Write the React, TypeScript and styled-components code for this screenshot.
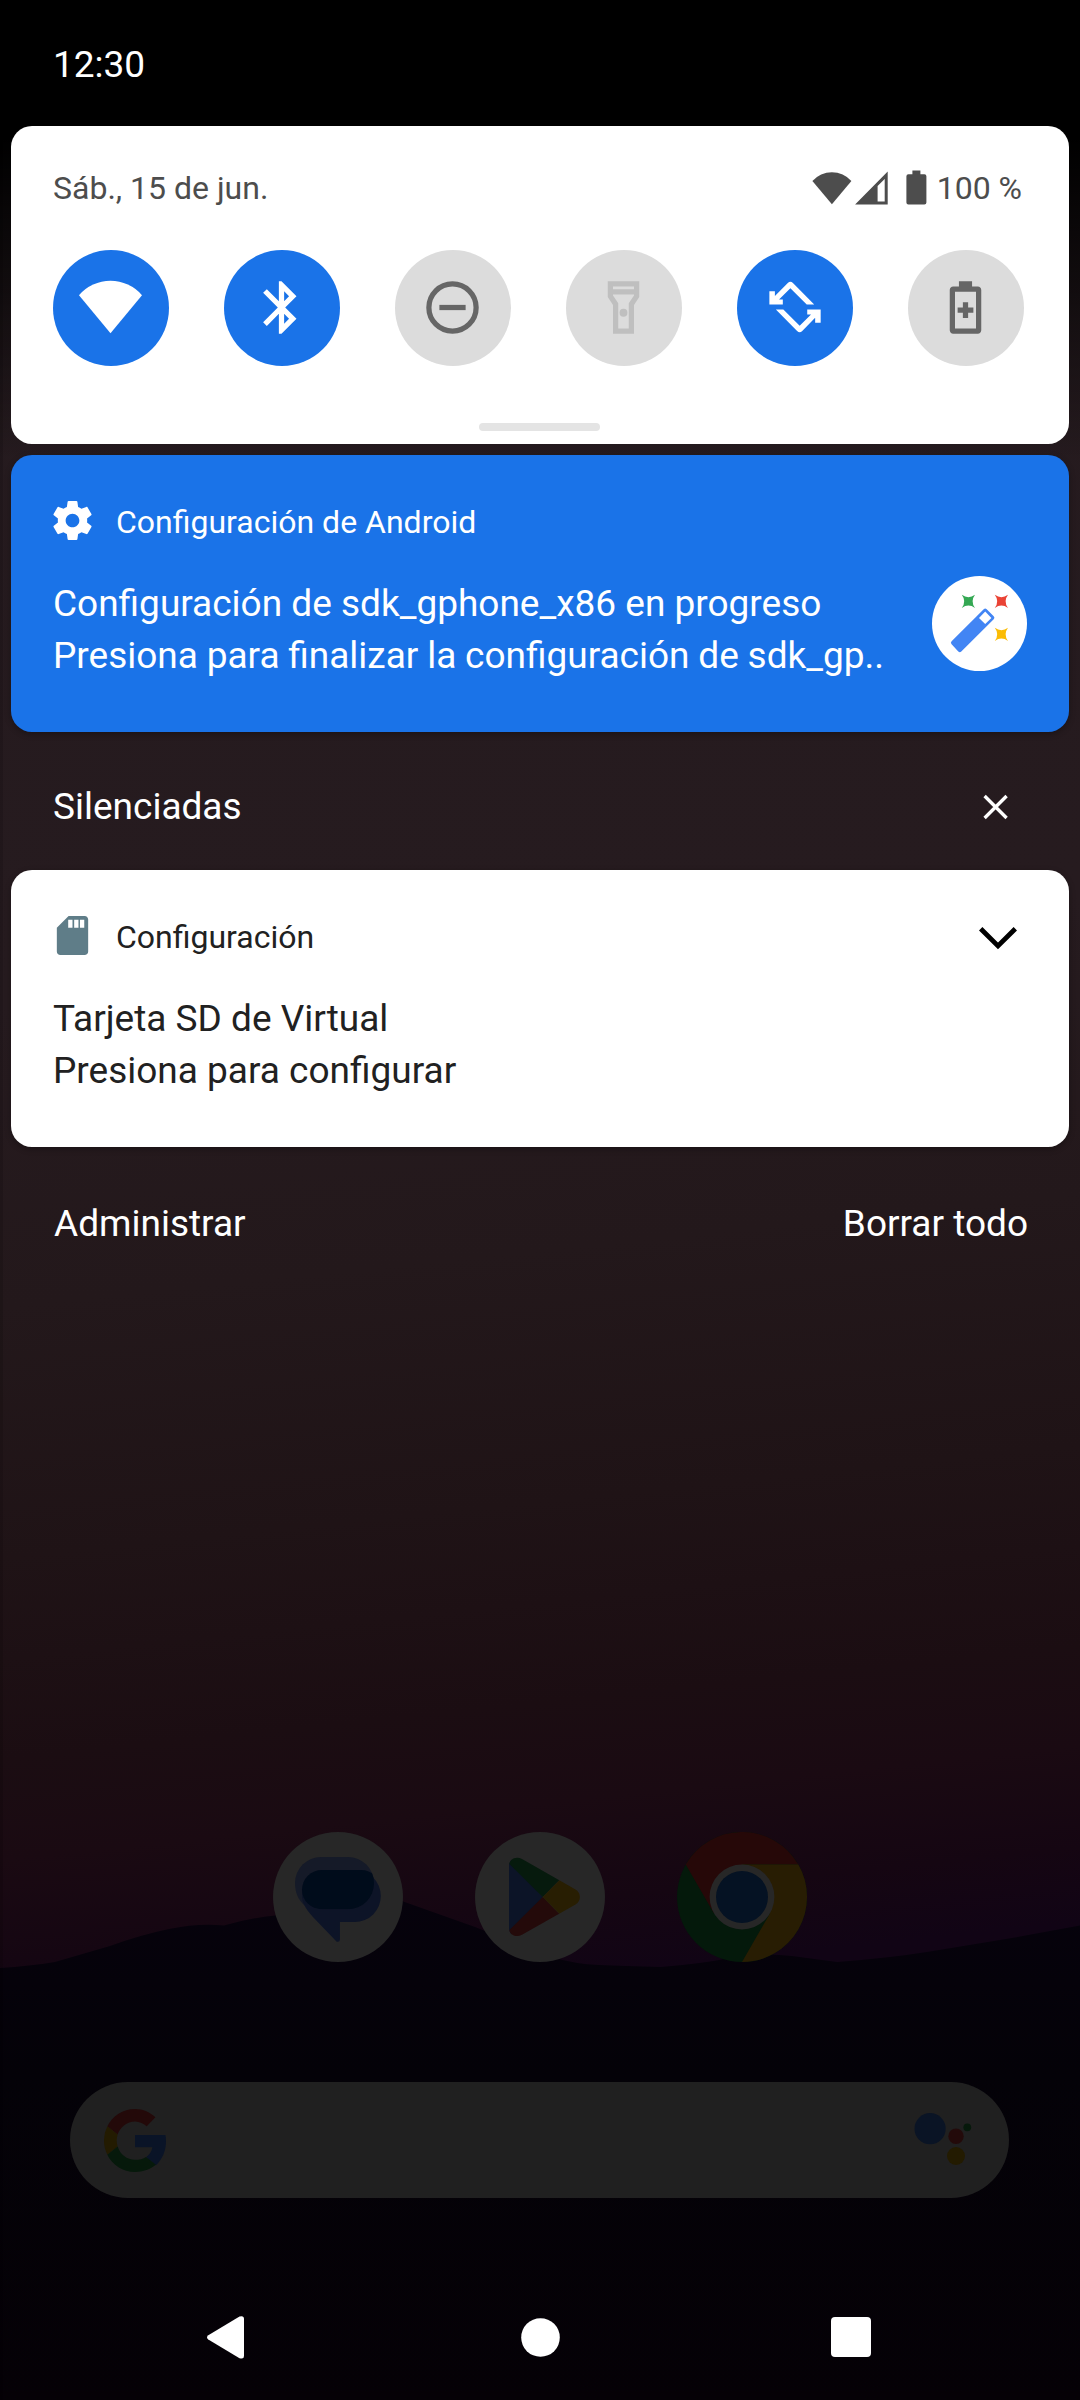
import React from "react";
import styled, { createGlobalStyle } from "styled-components";

const Global = createGlobalStyle`
  * { box-sizing: border-box; }
  body { margin: 0; background: #000; }
`;

const Screen = styled.div`
  position: relative;
  isolation: isolate;
  display: flex;
  flex-direction: column;
  width: 1080px;
  height: 2400px;
  overflow: hidden;
  font-family: Roboto, "Noto Sans", sans-serif;
  font-size: 37px;
  line-height: 52px;
  color: #fff;
  background: linear-gradient(
    174deg,
    #241a1e 0%,
    #261b1f 40%,
    #23181b 52%,
    #1f1316 62%,
    #1b0d12 70%,
    #1a0a12 74%,
    #150612 78%,
    #110415 81%
  );
`;

const Wallpaper = styled.svg`
  position: absolute;
  inset: 0;
  z-index: -1;
`;

const StatusBar = styled.header`
  display: flex;
  align-items: center;
  height: 126px;
  padding: 4px 53px 0;
`;

const Shade = styled.main`
  display: flex;
  flex-direction: column;
  padding: 0 11px;
`;

const QuickSettings = styled.section`
  display: flex;
  flex-direction: column;
  height: 318px;
  padding: 36px 42px 13px;
  border-radius: 21px;
  background: #fff;
  color: #4d4d4d;
`;

const QuickHeader = styled.div`
  display: flex;
  align-items: center;
  justify-content: space-between;
  height: 53px;
  font-size: 32px;
  line-height: 50px;
`;

const DateText = styled.span`
  padding-bottom: 2px;
`;

const SystemIcons = styled.div`
  display: flex;
  align-items: center;
  padding-right: 5px;
`;

const Percent = styled.span`
  margin-left: 6px;
  padding-bottom: 2px;
`;

const Tiles = styled.div`
  display: flex;
  gap: 55px;
  margin-top: 35px;
`;

const Tile = styled.button<{ $state: "on" | "off" | "disabled" }>`
  display: flex;
  padding: 26px;
  width: 116px;
  height: 116px;
  border: 0;
  border-radius: 50%;
  background: ${(p) => (p.$state === "on" ? "#1a73e8" : "#dcdcdc")};
  color: ${(p) => (p.$state === "on" ? "#fff" : p.$state === "off" ? "#666" : "#bfbfbf")};
`;

const TileSvg = styled.svg`
  flex: none;
  width: 63px;
  height: 63px;
`;

const Handle = styled.div`
  width: 121px;
  height: 8px;
  margin: auto 427px 0 426px;
  border-radius: 4px;
  background: #e4e4e4;
`;

const Notification = styled.article<{ $accent?: boolean }>`
  display: flex;
  flex-direction: column;
  height: 277px;
  padding: 42px;
  border-radius: 21px;
  background: ${(p) => (p.$accent ? "#1a73e8" : "#fff")};
  color: ${(p) => (p.$accent ? "#fff" : "#212121")};
  box-shadow: 0 2px 6px rgba(0, 0, 0, 0.3);
`;

const FirstNotification = styled(Notification)`
  margin-top: 11px;
`;

const NotificationHeader = styled.div`
  display: flex;
  align-items: center;
  gap: 20px;
  height: 47px;
  margin: 0 4px 0 -4px;
  font-size: 32px;
  line-height: 50px;
`;

const AppName = styled.span`
  flex: 1;
  padding-top: 3px;
`;

const NotificationBody = styled.div`
  display: flex;
  justify-content: space-between;
  margin-top: 32px;
`;

const Lines = styled.div`
  padding-top: 2px;
  white-space: nowrap;
`;

const LongLine = styled.div`
  word-spacing: -0.4px;
`;

const SectionHeader = styled.div`
  display: flex;
  align-items: center;
  justify-content: space-between;
  height: 138px;
  padding: 12px 60px 0 42px;
`;

const Footer = styled.footer`
  display: flex;
  align-items: center;
  justify-content: space-between;
  height: 153px;
  padding: 0 41px 0 43px;
`;

const Dock = styled.div`
  display: flex;
  justify-content: center;
  gap: 72px;
  margin-top: auto;
`;

const SearchBar = styled.div`
  display: flex;
  align-items: center;
  justify-content: space-between;
  height: 116px;
  margin: 120px 71px 0 70px;
  padding: 0 36px 0 34px;
  border-radius: 58px;
  background: #202020;
`;

const NavBar = styled.nav`
  display: grid;
  grid-template-columns: 314px 310px 1fr;
  align-items: center;
  height: 126px;
  margin-top: 76px;
  padding-left: 207px;
`;

const TileIcon = ({ children }: { children: React.ReactNode }) => (
  <TileSvg viewBox="0 0 24 24" fill="currentColor">
    {children}
  </TileSvg>
);

const rotateArrow =
  "M16.65 10.86 10.43 4.65 6.1 8.95H7.55V10.86H2.43V5.78H4.53V7.65L9.45 2.65a1.4 1.4 0 0 1 1.96 0L19.5 10.86Z";

const WifiTile = () => (
  <TileIcon>
    <path d="M12 21.8 0 7.3A15.84 15.84 0 0 1 24 7.3Z" />
  </TileIcon>
);
const BluetoothTile = () => (
  <TileIcon>
    <path d="M17.71 7.71 12 2h-1v7.59L6.41 5 5 6.41 10.59 12 5 17.59 6.41 19 11 14.41V22h1l5.71-5.71-4.3-4.29zM13 5.83l1.88 1.88L13 9.59zm1.88 10.46L13 18.17v-3.76z" />
  </TileIcon>
);
const DisturbTile = () => (
  <TileIcon>
    <circle cx="12" cy="12" r="9" fill="none" stroke="currentColor" strokeWidth="2" />
    <path d="M7 11h10v2H7z" />
  </TileIcon>
);
const FlashTile = () => (
  <TileIcon>
    <path
      fillRule="evenodd"
      d="M6 2v6l2 3v11h8V11l2-3V2zm10 2v1H8V4zm-2 6.4V20h-4v-9.61l-2-3V7h8v.39z"
    />
    <circle cx="12" cy="14" r="1.5" />
  </TileIcon>
);
const RotateTile = () => (
  <TileIcon>
    <path d={rotateArrow} />
    <path d={rotateArrow} transform="rotate(180 12.2 11.8)" />
  </TileIcon>
);
const SaverTile = () => (
  <TileIcon>
    <path
      fillRule="evenodd"
      d="M9.5 2h5v2h2.2c.7 0 1.3.6 1.3 1.3v15.4c0 .7-.6 1.3-1.3 1.3H7.3C6.6 22 6 21.4 6 20.7V5.3C6 4.6 6.6 4 7.3 4H9.5zM8 6v14h8V6z"
    />
    <path d="M11 10h2v2h2v2h-2v2h-2v-2H9v-2h2z" />
  </TileIcon>
);

const StatusIcons = () => (
  <svg width="120" height="40" viewBox="810.6 167.5 120 40" fill="#4d4d4d">
    <path d="M831.5 202.7 812 179.5A26 26 0 0 1 851 179.5Z" />
    <path fillRule="evenodd" d="M854.7 203 887.3 170V203ZM877.2 184.5V200H884.3V177.5Z" />
    <path d="M912 169h8v3.7h4q2 0 2 2V201q0 2-2 2H908q-2 0-2-2V174.7q0-2 2-2h4Z" />
  </svg>
);

const GearIcon = () => (
  <svg width="47" height="47" viewBox="0 0 24 24" fill="#fff">
    <path d="M19.43 12.98c.04-.32.07-.64.07-.98s-.03-.66-.07-.98l2.11-1.65c.19-.15.24-.42.12-.64l-2-3.46c-.12-.22-.39-.3-.61-.22l-2.49 1c-.52-.4-1.08-.73-1.69-.98l-.38-2.65C14.46 2.18 14.25 2 14 2h-4c-.25 0-.46.18-.49.42l-.38 2.65c-.61.25-1.17.59-1.69.98l-2.49-1c-.23-.09-.49 0-.61.22l-2 3.46c-.13.22-.07.49.12.64l2.11 1.65c-.04.32-.07.65-.07.98s.03.66.07.98l-2.11 1.65c-.19.15-.24.42-.12.64l2 3.46c.12.22.39.3.61.22l2.49-1c.52.4 1.08.73 1.69.98l.38 2.65c.03.24.24.42.49.42h4c.25 0 .46-.18.49-.42l.38-2.65c.61-.25 1.17-.59 1.69-.98l2.49 1c.23.09.49 0 .61-.22l2-3.46c.12-.22.07-.49-.12-.64zM12 15.5c-1.93 0-3.5-1.57-3.5-3.5s1.57-3.5 3.5-3.5 3.5 1.57 3.5 3.5-1.57 3.5-3.5 3.5z" />
  </svg>
);

const SdIcon = () => (
  <svg width="47" height="47" viewBox="0 0 24 24" fill="#5f7d88">
    <path d="M18.2 2H10L4 8V20.2C4 21.2 4.8 22 5.8 22H18.2c1 0 1.8-.8 1.8-1.8V3.8C20 2.8 19.2 2 18.2 2ZM12 8h-2.2V3.9H12Zm3.05 0h-2.2V3.9h2.2Zm2.95 0h-2.2V3.9H18Z" />
  </svg>
);

const star = "M-6.6-6.6Q0-1.7 6.6-6.6 1.7 0 6.6 6.6 0 1.7-6.6 6.6-1.7 0-6.6-6.6Z";

const WizardIcon = () => (
  <svg width="95" height="95" viewBox="0 0 95 95">
    <circle cx="47.5" cy="47.5" r="47.5" fill="#fff" />
    <path d={star} transform="translate(36.4 25.3)" fill="#34a853" />
    <path d={star} transform="translate(69.4 25.3)" fill="#ea4335" />
    <path d={star} transform="translate(69.4 58.3)" fill="#fbbc04" />
    <path
      d="M51.7 33.3q1.5-1.5 3 0l7 7q1.5 1.5 0 3L29.3 75.5q-1.5 1.5-3 0l-6.7-7.2q-1.5-1.5 0-3ZM53.2 35.6 47 41.9l6.2 6.2 6.2-6.2Z"
      fill="#4285f4"
      fillRule="evenodd"
    />
  </svg>
);

const CloseIcon = () => (
  <svg width="26" height="26" viewBox="0 0 26 26" stroke="#fff" strokeWidth="3.3">
    <path d="M1.6 2 23.600 24M23.600 2 1.600 24" />
  </svg>
);

const ChevronIcon = () => (
  <svg width="50" height="40" viewBox="973 915.5 50 40" fill="none" stroke="#000" strokeWidth="4.8">
    <path d="M980.7 928.2 998 945.4 1015.3 928.2" />
  </svg>
);

const MessagesIcon = () => (
  <svg width="130" height="130" viewBox="0 0 130 130">
    <defs>
      <clipPath id="rear">
        <rect x="22" y="25" width="79" height="52.3" rx="26.1" />
      </clipPath>
    </defs>
    <circle cx="65" cy="65" r="65" fill="#272727" />
    <path d="M48 25H75a26 26 0 0 1 26 26V77H36C27 71 22 63 22 51A26 26 0 0 1 48 25Z" fill="#151a28" />
    <path
      d="M55 38H81.8a26 26 0 0 1 0 52H66.9V107.5q0 3-3.2 2.2L39.7 84.7C32 76 29 70 29 64A26 26 0 0 1 55 38Z"
      fill="#0d1427"
    />
    <rect x="29" y="38" width="79" height="39.3" rx="20" fill="#000c1b" clipPath="url(#rear)" />
  </svg>
);

const PlayIcon = () => (
  <svg width="130" height="130" viewBox="0 0 130 130">
    <defs>
      <clipPath id="play">
        <path d="M34 34C34 27 41 23.5 47 27L100.5 57.5C106.3 61 106.3 69 100.5 72.5L47 102.7C41 106 34 103 34 96Z" />
      </clipPath>
    </defs>
    <circle cx="65" cy="65" r="65" fill="#272727" />
    <g clipPath="url(#play)">
      <path d="M30 20V110L67.7 65Z" fill="#0c1427" />
      <path d="M30 27.5 67.7 65 100 32V0H30Z" fill="#061a0d" />
      <path d="M30 102.5 67.7 65 100 98V130H30Z" fill="#240a0a" />
      <path d="M67.7 65 110 22.7V107.3Z" fill="#281e02" />
    </g>
  </svg>
);

const ChromeIcon = () => (
  <svg width="130" height="130" viewBox="0 0 130 130">
    <circle cx="65" cy="65" r="65" fill="#04190b" />
    <path d="M8.7 32.5A65 65 0 0 1 121.3 32.5H65V65L36.9 81.25Z" fill="#260808" />
    <path d="M121.3 32.5A65 65 0 0 1 65 130L93.1 81.25 65 65V32.5Z" fill="#281d03" />
    <circle cx="65" cy="65" r="32.4" fill="#272727" />
    <circle cx="65" cy="65" r="26" fill="#051223" />
  </svg>
);

const GoogleIcon = () => (
  <svg width="62" height="63" viewBox="2 2 44 44" preserveAspectRatio="none">
    <path fill="#230909" d="M24 10.7c3.54 0 6.2 1.5 8.3 3.3l6.2-6.2C34.7 4.3 29.93 2 24 2 15.4 2 7.96 6.93 4.34 14.12l7.35 5.7c1.73-5.2 6.58-9.12 12.31-9.12z" />
    <path fill="#0a1427" d="M46 24.5c0-1.6-.15-2.9-.38-4.3H24v8.5h12.4c-.53 2.9-2.18 5.3-4.65 6.98l7.1 5.6C43.4 37 46 31.4 46 24.5z" />
    <path fill="#231b01" d="M11.69 28.18C11.25 26.86 11 25.45 11 24s.25-2.86.69-4.18l-7.35-5.7A21.8 21.8 0 0 0 2 24c0 3.55.85 6.91 2.34 9.88z" />
    <path fill="#06190b" d="M24 46c5.94 0 10.92-1.95 14.85-5.05l-7.1-5.5c-1.97 1.32-4.49 2.05-7.75 2.05-5.73 0-10.58-3.87-12.31-9.32l-7.35 5.7C7.96 41.07 15.4 46 24 46z" />
  </svg>
);

const AssistantIcon = () => (
  <svg width="59" height="56" viewBox="914 2112 59 56">
    <circle cx="930.1" cy="2128.7" r="15.6" fill="#0a1425" />
    <circle cx="956" cy="2136.3" r="7.7" fill="#230a0a" />
    <circle cx="956" cy="2156" r="9" fill="#231b01" />
    <circle cx="967.3" cy="2127.3" r="3.9" fill="#06190b" />
  </svg>
);

const Hills = () => (
  <Wallpaper width="1080" height="2400" viewBox="0 0 1080 2400">
    <defs>
      <linearGradient id="hill" x1="0" y1="0" x2="0" y2="1">
        <stop offset="0" stopColor="#06020c" />
        <stop offset="0.35" stopColor="#040208" />
        <stop offset="1" stopColor="#050106" />
      </linearGradient>
      <linearGradient id="top" x1="0" y1="0" x2="0" y2="1">
        <stop offset="0" stopColor="#000" />
        <stop offset="0.3" stopColor="#000" />
        <stop offset="1" stopColor="#000" stopOpacity="0" />
      </linearGradient>
    </defs>
    <path
      d="M0 1968Q30 1966 55 1962L110 1946Q140 1935 169 1929T224 1925.5Q250 1918 275 1915.5C310 1900 370 1885 406 1902.5L475 1927 551 1957Q575 1964 599 1965T661 1967Q700 1964 730 1958T792 1956L837 1962Q890 1958 930 1951.5L1012 1938 1080 1925.5V2400H0Z"
      fill="url(#hill)"
    />
    <rect width="1080" height="460" fill="url(#top)" />
    <rect y="126" width="3" height="2274" fill="#000" opacity="0.12" />
  </Wallpaper>
);

export default function App() {
  return (
    <>
      <Global />
      <Screen>
        <Hills />
        <StatusBar>12:30</StatusBar>
        <Shade>
          <QuickSettings>
            <QuickHeader>
              <DateText>Sáb., 15 de jun.</DateText>
              <SystemIcons>
                <StatusIcons />
                <Percent>100 %</Percent>
              </SystemIcons>
            </QuickHeader>
            <Tiles>
              <Tile $state="on"><WifiTile /></Tile>
              <Tile $state="on"><BluetoothTile /></Tile>
              <Tile $state="off"><DisturbTile /></Tile>
              <Tile $state="disabled"><FlashTile /></Tile>
              <Tile $state="on"><RotateTile /></Tile>
              <Tile $state="off"><SaverTile /></Tile>
            </Tiles>
            <Handle />
          </QuickSettings>
          <FirstNotification $accent>
            <NotificationHeader>
              <GearIcon />
              <AppName>Configuración de Android</AppName>
            </NotificationHeader>
            <NotificationBody>
              <Lines>
                <div>Configuración de sdk_gphone_x86 en progreso</div>
                <LongLine>Presiona para finalizar la configuración de sdk_gp..</LongLine>
              </Lines>
              <WizardIcon />
            </NotificationBody>
          </FirstNotification>
          <SectionHeader>
            <span>Silenciadas</span>
            <CloseIcon />
          </SectionHeader>
          <Notification>
            <NotificationHeader>
              <SdIcon />
              <AppName>Configuración</AppName>
              <ChevronIcon />
            </NotificationHeader>
            <NotificationBody>
              <Lines>
                <div>Tarjeta SD de Virtual</div>
                <div>Presiona para configurar</div>
              </Lines>
            </NotificationBody>
          </Notification>
          <Footer>
            <span>Administrar</span>
            <span>Borrar todo</span>
          </Footer>
        </Shade>
        <Dock>
          <MessagesIcon />
          <PlayIcon />
          <ChromeIcon />
        </Dock>
        <SearchBar>
          <GoogleIcon />
          <AssistantIcon />
        </SearchBar>
        <NavBar>
          <svg width="37" height="43" viewBox="0 0 37 43" fill="#fff">
            <path d="M1.3 19.3 32.5.6Q37-.8 37 3V40Q37 43.6 32.5 42.2L1.3 23.5Q-1.3 21.4 1.3 19.3Z" />
          </svg>
          <svg width="39" height="39" viewBox="0 0 39 39" fill="#fff">
            <circle cx="19.5" cy="19.5" r="19.3" />
          </svg>
          <svg width="40" height="40" viewBox="0 0 40 40" fill="#fff">
            <rect width="40" height="40" rx="4" />
          </svg>
        </NavBar>
      </Screen>
    </>
  );
}
